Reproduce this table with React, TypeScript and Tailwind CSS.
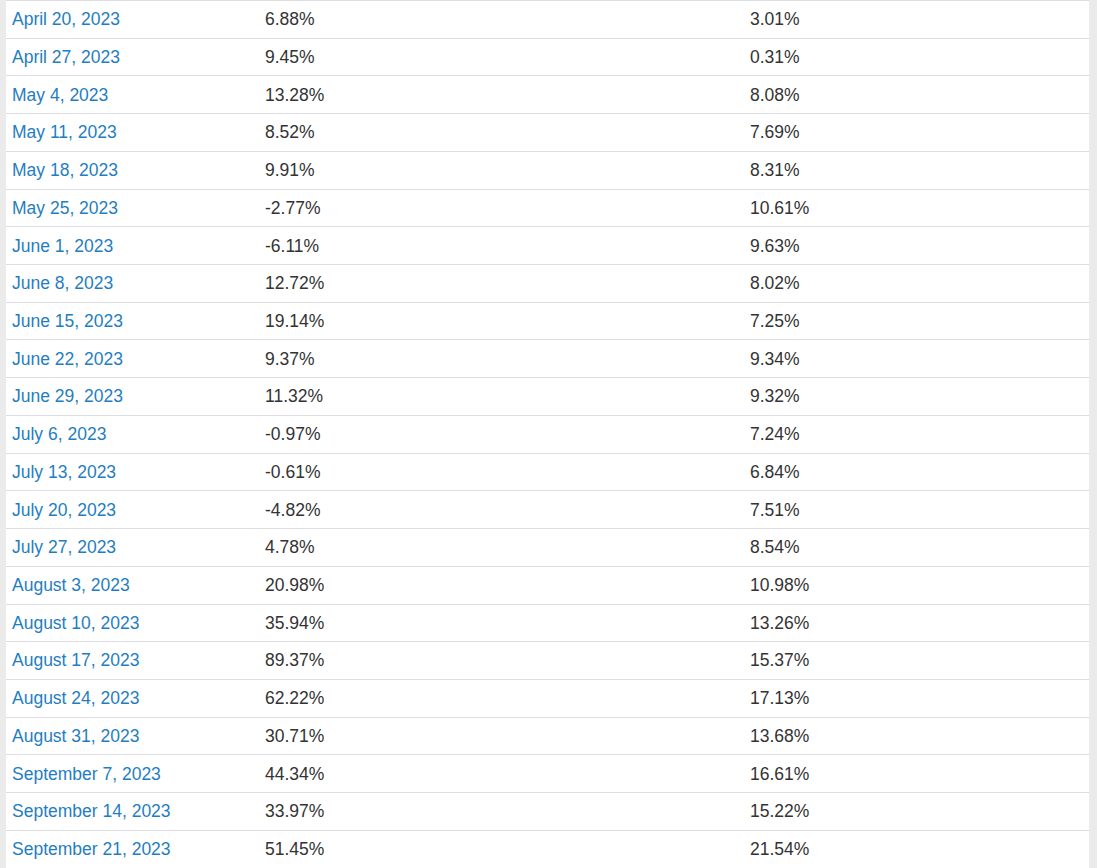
const rows: [string, string, string][] = [
  ["April 20, 2023", "6.88%", "3.01%"],
  ["April 27, 2023", "9.45%", "0.31%"],
  ["May 4, 2023", "13.28%", "8.08%"],
  ["May 11, 2023", "8.52%", "7.69%"],
  ["May 18, 2023", "9.91%", "8.31%"],
  ["May 25, 2023", "-2.77%", "10.61%"],
  ["June 1, 2023", "-6.11%", "9.63%"],
  ["June 8, 2023", "12.72%", "8.02%"],
  ["June 15, 2023", "19.14%", "7.25%"],
  ["June 22, 2023", "9.37%", "9.34%"],
  ["June 29, 2023", "11.32%", "9.32%"],
  ["July 6, 2023", "-0.97%", "7.24%"],
  ["July 13, 2023", "-0.61%", "6.84%"],
  ["July 20, 2023", "-4.82%", "7.51%"],
  ["July 27, 2023", "4.78%", "8.54%"],
  ["August 3, 2023", "20.98%", "10.98%"],
  ["August 10, 2023", "35.94%", "13.26%"],
  ["August 17, 2023", "89.37%", "15.37%"],
  ["August 24, 2023", "62.22%", "17.13%"],
  ["August 31, 2023", "30.71%", "13.68%"],
  ["September 7, 2023", "44.34%", "16.61%"],
  ["September 14, 2023", "33.97%", "15.22%"],
  ["September 21, 2023", "51.45%", "21.54%"],
];

export default function App() {
  return (
    <div className="h-[868px] overflow-hidden bg-[#ebebeb] pl-[6px] pr-[8px] font-['Liberation_Sans',Arial,sans-serif] text-[17.5px]">
      <div className="border-t border-[#dddde3] bg-white">
        {rows.map(([date, a, b]) => (
          <div
            key={date}
            className="flex h-[37.727px] items-center border-b border-[#dddde3]"
          >
            <div className="w-[253px] pl-[6px]">
              <a href="#" className="text-[#1f7ec2]">
                {date}
              </a>
            </div>
            <div className="w-[485px] pl-[6px] text-[#333]">{a}</div>
            <div className="flex-1 pl-[6px] text-[#333]">{b}</div>
          </div>
        ))}
      </div>
    </div>
  );
}
